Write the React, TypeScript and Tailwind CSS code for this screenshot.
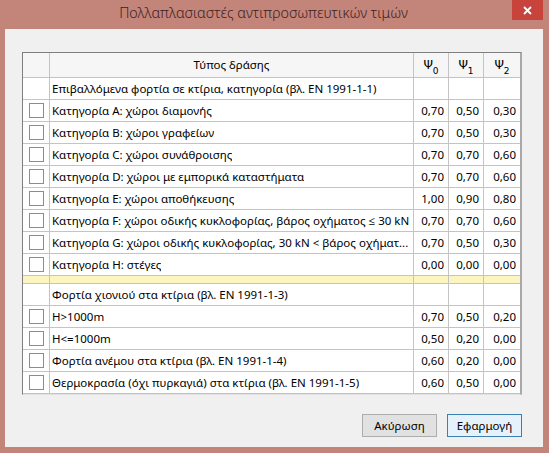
import React from "react";

type Row =
  | { kind: "group"; label: string }
  | { kind: "item"; label: string; v: [string, string, string] }
  | { kind: "sep" };

const rows: Row[] = [
  { kind: "group", label: "Επιβαλλόμενα φορτία σε κτίρια, κατηγορία (βλ. EN 1991-1-1)" },
  { kind: "item", label: "Κατηγορία A: χώροι διαμονής", v: ["0,70", "0,50", "0,30"] },
  { kind: "item", label: "Κατηγορία B: χώροι γραφείων", v: ["0,70", "0,50", "0,30"] },
  { kind: "item", label: "Κατηγορία C: χώροι συνάθροισης", v: ["0,70", "0,70", "0,60"] },
  { kind: "item", label: "Κατηγορία D: χώροι με εμπορικά καταστήματα", v: ["0,70", "0,70", "0,60"] },
  { kind: "item", label: "Κατηγορία E: χώροι αποθήκευσης", v: ["1,00", "0,90", "0,80"] },
  { kind: "item", label: "Κατηγορία F: χώροι οδικής κυκλοφορίας, βάρος οχήματος ≤ 30 kN", v: ["0,70", "0,70", "0,60"] },
  { kind: "item", label: "Κατηγορία G: χώροι οδικής κυκλοφορίας, 30 kN < βάρος οχήματ...", v: ["0,70", "0,50", "0,30"] },
  { kind: "item", label: "Κατηγορία H: στέγες", v: ["0,00", "0,00", "0,00"] },
  { kind: "sep" },
  { kind: "group", label: "Φορτία χιονιού στα κτίρια (βλ. EN 1991-1-3)" },
  { kind: "item", label: "H>1000m", v: ["0,70", "0,50", "0,20"] },
  { kind: "item", label: "H<=1000m", v: ["0,50", "0,20", "0,00"] },
  { kind: "item", label: "Φορτία ανέμου στα κτίρια (βλ. EN 1991-1-4)", v: ["0,60", "0,20", "0,00"] },
  { kind: "item", label: "Θερμοκρασία (όχι πυρκαγιά) στα κτίρια (βλ. EN 1991-1-5)", v: ["0,60", "0,50", "0,00"] },
];

function CheckBox() {
  return <div className="w-[15px] h-[15px] border border-[#8c8c8c] bg-white" />;
}

export default function App() {
  const font = { fontFamily: '"Noto Sans", "Open Sans", sans-serif' };
  return (
    <div className="w-[549px] h-[453px] bg-[#c3857a] flex flex-col overflow-hidden" style={font}>
      <div className="relative h-[29px] flex items-center justify-center pr-[22px]">
        <span className="text-[14.3px] text-[#3f201b] font-light leading-none pb-[3px]">
          Πολλαπλασιαστές αντιπροσωπευτικών τιμών
        </span>
        <div className="absolute right-[6px] top-0 w-[31px] h-[20px] bg-[#c9433d] flex items-center justify-center">
          <svg width="9" height="9" viewBox="0 0 9 9">
            <path d="M1 1 L8 8 M8 1 L1 8" stroke="white" strokeWidth="1.8" />
          </svg>
        </div>
      </div>
      <div className="ml-[5px] w-[538px] h-[418px] bg-[#f0f0f0] flex flex-col">
        <div className="ml-[17px] mt-[23px] w-[500px] border-t border-l border-[#7f7f7f] border-r-2 border-r-[#a9a9a9] border-b border-b-[#e0e0e0] bg-white text-[11.5px] text-black">
          <div className="grid grid-cols-[27px_364px_35px_35px_36px] h-[25px] bg-[#f6f6f6]">
            <div className="border-r border-b border-[#c4c4c4]" />
            <div className="border-r border-b border-[#c4c4c4] flex items-center justify-center">
              Τύπος δράσης
            </div>
            {["0", "1", "2"].map((s, i) => (
              <div
                key={s}
                className={`border-b border-[#c4c4c4] flex items-center justify-center ${i < 2 ? "border-r" : ""}`}
              >
                <span className="text-[12px]" style={{ fontFamily: '"DejaVu Sans", sans-serif' }}>
                  Ψ<sub className="text-[9px] align-[-3px]">{s}</sub>
                </span>
              </div>
            ))}
          </div>
          {rows.map((r, idx) => {
            if (r.kind === "sep") {
              return (
                <div key={idx} className="grid grid-cols-[27px_364px_35px_35px_36px] h-[8px] bg-[#fcf5c0]">
                  <div className="border-r border-b border-[#c4c4c4]" />
                  <div className="border-r border-b border-[#c4c4c4]" />
                  <div className="border-r border-b border-[#c4c4c4]" />
                  <div className="border-r border-b border-[#c4c4c4]" />
                  <div className="border-b border-[#c4c4c4]" />
                </div>
              );
            }
            const isItem = r.kind === "item";
            const vals = isItem ? r.v : ["", "", ""];
            return (
              <div key={idx} className="grid grid-cols-[27px_364px_35px_35px_36px] h-[22px]">
                <div className="border-r border-b border-[#c4c4c4] flex items-center justify-center pl-[1px]">
                  {isItem ? <CheckBox /> : null}
                </div>
                <div className="border-r border-b border-[#c4c4c4] flex items-center pl-[2px] pr-[1px] min-w-0 overflow-hidden">
                  <span className="truncate">{r.label}</span>
                </div>
                {vals.map((v, i) => (
                  <div
                    key={i}
                    className={`border-b border-[#c4c4c4] flex items-center justify-end pr-[4px] ${i < 2 ? "border-r" : ""}`}
                  >
                    {v}
                  </div>
                ))}
              </div>
            );
          })}
        </div>
        <div className="flex justify-end gap-[10px] mt-[19px] mr-[21px]">
          <button className="w-[75px] h-[23px] border border-[#adadad] bg-[#e1e1e1] text-[11.5px] text-black">
            Ακύρωση
          </button>
          <button className="w-[75px] h-[23px] border border-[#3c7fb1] bg-[#e5f1fb] text-[11.5px] text-black">
            Εφαρμογή
          </button>
        </div>
      </div>
    </div>
  );
}
